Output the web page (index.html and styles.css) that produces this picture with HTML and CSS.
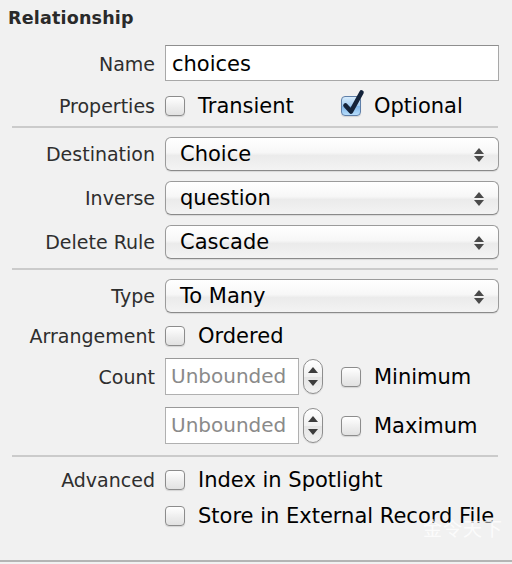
FILE: index.html
```html
<!DOCTYPE html>
<html>
<head>
<meta charset="utf-8">
<link rel="stylesheet" href="styles.css">
</head>
<body>
<div class="panel">
  <div class="title">Relationship</div>

  <div class="row r-name">
    <div class="label">Name</div>
    <div class="textfield">choices</div>
  </div>

  <div class="row r-props">
    <div class="label">Properties</div>
    <div class="ctrl">
      <span class="check first-check"><span class="box"></span>Transient</span>
      <span class="check"><span class="box checked"><svg viewBox="0 0 24 28" width="24" height="28"><path d="M4.5 16.5 L10 22.5 L20.5 3.5" fill="none" stroke="#14233a" stroke-width="4.6" stroke-linecap="round" stroke-linejoin="round"/></svg></span>Optional</span>
    </div>
  </div>

  <div class="sep s1"></div>

  <div class="row r-pop first">
    <div class="label">Destination</div>
    <div class="popup">Choice<span class="arrows"><i class="up"></i><i class="down"></i></span></div>
  </div>
  <div class="row r-pop">
    <div class="label">Inverse</div>
    <div class="popup">question<span class="arrows"><i class="up"></i><i class="down"></i></span></div>
  </div>
  <div class="row r-pop">
    <div class="label">Delete Rule</div>
    <div class="popup">Cascade<span class="arrows"><i class="up"></i><i class="down"></i></span></div>
  </div>

  <div class="sep s2"></div>

  <div class="row r-pop first">
    <div class="label">Type</div>
    <div class="popup">To Many<span class="arrows"><i class="up"></i><i class="down"></i></span></div>
  </div>

  <div class="row r-arr">
    <div class="label">Arrangement</div>
    <div class="ctrl"><span class="check"><span class="box"></span>Ordered</span></div>
  </div>

  <div class="row r-count">
    <div class="label">Count</div>
    <div class="ctrl">
      <div class="numfield">Unbounded</div>
      <div class="stepper"><i class="up"></i><i class="down"></i></div>
      <span class="check mm"><span class="box"></span>Minimum</span>
    </div>
  </div>
  <div class="row r-count second">
    <div class="label"></div>
    <div class="ctrl">
      <div class="numfield">Unbounded</div>
      <div class="stepper"><i class="up"></i><i class="down"></i></div>
      <span class="check mm"><span class="box"></span>Maximum</span>
    </div>
  </div>

  <div class="sep s3"></div>

  <div class="row r-adv">
    <div class="label">Advanced</div>
    <div class="ctrl"><span class="check"><span class="box"></span>Index in Spotlight</span></div>
  </div>
  <div class="row r-adv second">
    <div class="label"></div>
    <div class="ctrl"><span class="check"><span class="box"></span>Store in External Record File</span></div>
  </div>

  <div class="watermark">金令天下</div>
</div>
<div class="bottomline"></div>
</body>
</html>
```

FILE: styles.css
```css
html, body {
  margin: 0;
  padding: 0;
  background: #f1f1f1;
}
body {
  width: 512px;
  height: 564px;
  overflow: hidden;
  font-family: "DejaVu Sans", "Noto Sans CJK SC", sans-serif;
  font-size: 19px;
  color: #000;
}
.panel {
  position: relative;
  height: 560px;
  padding: 0 13px 0 8px;
  box-sizing: border-box;
}
.title {
  padding-top: 6px;
  font-weight: bold;
  font-size: 17.5px;
  color: #2a2a2a;
  height: 39px;
  line-height: 24px;
  letter-spacing: 0.2px;
}
.row {
  display: grid;
  grid-template-columns: 147px 1fr;
  column-gap: 10px;
  align-items: center;
}
.label {
  text-align: right;
  color: #2e2e2e;
  white-space: nowrap;
  font-size: 19px;
}
.ctrl {
  display: flex;
  align-items: center;
}
.r-name { height: 36px; }
.r-name .label { padding-top: 2px; }
.textfield {
  height: 36px;
  box-sizing: border-box;
  background: #fff;
  border: 1px solid #a8a8a8;
  border-top-color: #8e8e8e;
  padding-left: 6px;
  padding-top: 2px;
  line-height: 32px;
  font-size: 21px;
}
.r-props { height: 20px; margin-top: 14px; }
.check {
  display: inline-flex;
  align-items: center;
  white-space: nowrap;
  font-size: 21px;
  line-height: 22px;
}
.first-check { width: 176px; }
.box {
  position: relative;
  width: 18px;
  height: 18px;
  border: 1px solid #8c8c8c;
  border-radius: 4px;
  background: linear-gradient(#ffffff, #ececec 60%, #e2e2e2);
  box-shadow: 0 1px 1px rgba(0,0,0,0.12);
  margin-right: 13px;
  flex: none;
}
.box.checked {
  border-color: #5f7fa8;
  background: linear-gradient(#d8ecfc, #9fcbf2 50%, #7fb6ea 51%, #b6dcfa);
}
.box svg {
  position: absolute;
  left: -1px;
  top: -8px;
}

.sep {
  height: 2px;
  background: #cbcbcb;
  margin-left: 4px;
  margin-right: 1px;
}
.s1 { margin-top: 11px; }
.s2 { margin-top: 9px; }
.s3 { margin-top: 12px; }

.r-pop { height: 34px; margin-top: 10px; }
.r-pop.first { margin-top: 9px; }
.popup {
  position: relative;
  height: 34px;
  box-sizing: border-box;
  border: 1px solid #9b9b9b;
  border-bottom-color: #8a8a8a;
  border-radius: 6px;
  background: linear-gradient(#ffffff, #f7f7f7 45%, #ebebeb 55%, #f3f3f3);
  box-shadow: 0 1px 1px rgba(0,0,0,0.1);
  padding-left: 14px;
  padding-top: 1px;
  line-height: 31px;
  font-size: 21px;
}
.arrows {
  position: absolute;
  right: 13px;
  top: 10px;
  width: 11px;
  height: 14px;
}
.arrows i, .stepper i {
  position: absolute;
  width: 0;
  height: 0;
  border-left: 5px solid transparent;
  border-right: 5px solid transparent;
}
.arrows i.up { top: 0; left: 0; border-bottom: 6px solid #4a4a4a; }
.arrows i.down { bottom: 0; left: 0; border-top: 6px solid #4a4a4a; }

.r-arr { height: 22px; margin-top: 12px; }

.r-count { height: 37px; margin-top: 11px; }
.r-count.second { margin-top: 12px; height: 36px; }
.numfield {
  width: 134px;
  height: 37px;
  box-sizing: border-box;
  background: #fff;
  border: 1px solid #b0b0b0;
  border-top-color: #999;
  color: #8a8a8a;
  font-size: 20px;
  line-height: 35px;
  padding-left: 5px;
  overflow: hidden;
  white-space: nowrap;
}
.stepper {
  position: relative;
  width: 20px;
  height: 35px;
  box-sizing: border-box;
  margin-left: 4px;
  border: 1px solid #8e8e8e;
  border-radius: 10px;
  background: linear-gradient(#ffffff, #f0f0f0 50%, #e4e4e4 51%, #f2f2f2);
  box-shadow: 0 1px 1px rgba(0,0,0,0.1);
}
.stepper i { left: 4px; }
.stepper i.up { top: 7px; border-bottom: 6px solid #3c3c3c; }
.stepper i.down { bottom: 7px; border-top: 6px solid #3c3c3c; }
.check.mm { margin-left: 18px; }

.r-adv { height: 22px; margin-top: 12px; }
.r-adv.second { margin-top: 14px; }

.watermark {
  position: absolute;
  left: 423px;
  top: 514px;
  color: rgba(255,255,255,0.8);
  font-size: 19px;
  letter-spacing: 1px;
}
.bottomline {
  height: 2px;
  background: #b4b4b4;
}
```
